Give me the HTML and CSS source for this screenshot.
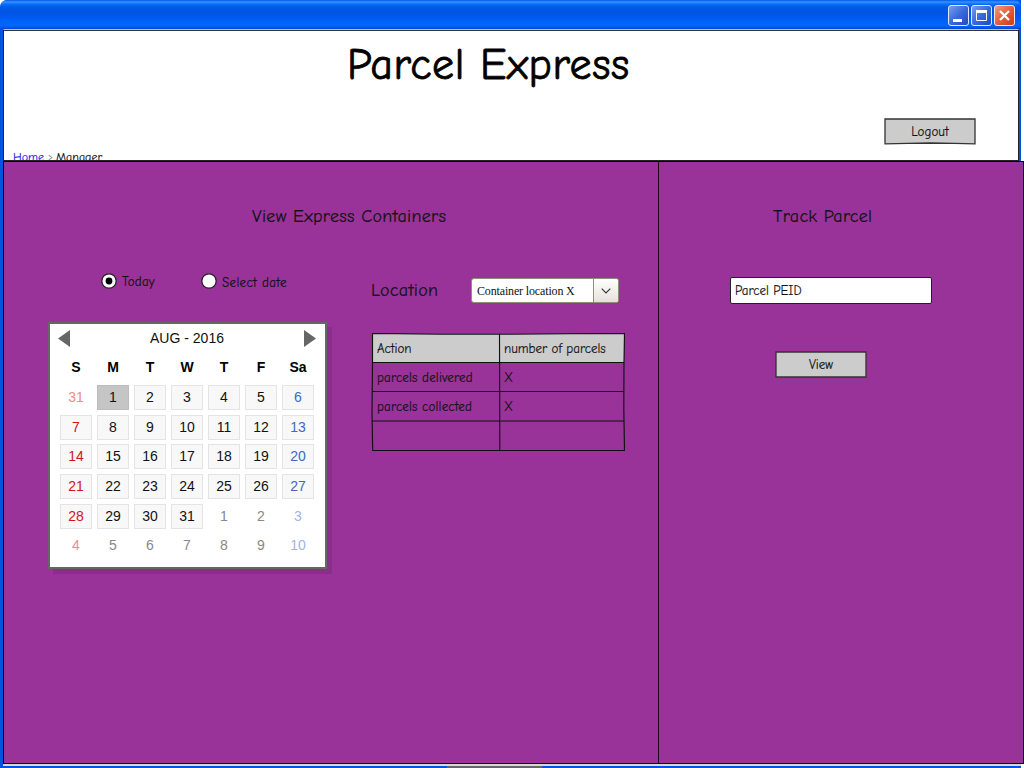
FILE: index.html
```html
<!DOCTYPE html>
<html lang="en">
<head>
<meta charset="utf-8">
<title>Parcel Express</title>
<link rel="stylesheet" href="styles.css">
</head>
<body>
<div class="window">
  <div class="titlebar">
    <svg class="win-btn" viewBox="0 0 21 21"><defs><linearGradient id="gb" x1="0" y1="0" x2="1" y2="1"><stop offset="0" stop-color="#7ba2f0"/><stop offset=".5" stop-color="#3a69dc"/><stop offset="1" stop-color="#1c48c4"/></linearGradient><linearGradient id="gr" x1="0" y1="0" x2="1" y2="1"><stop offset="0" stop-color="#f0a088"/><stop offset=".5" stop-color="#e35f3c"/><stop offset="1" stop-color="#cc3a10"/></linearGradient></defs><rect x=".5" y=".5" width="20" height="20" rx="2.5" fill="url(#gb)" stroke="#dfe9fb"/><rect x="5" y="14" width="9" height="3" fill="#fff"/></svg>
    <svg class="win-btn" viewBox="0 0 21 21"><rect x=".5" y=".5" width="20" height="20" rx="2.5" fill="url(#gb)" stroke="#dfe9fb"/><path d="M5.500 6V15.500H15.500V6" fill="none" stroke="#fff"/><rect x="5" y="5" width="11" height="3" fill="#fff"/></svg>
    <svg class="win-btn" viewBox="0 0 21 21"><rect x=".5" y=".5" width="20" height="20" rx="2.5" fill="url(#gr)" stroke="#f6e4e0"/><path d="M6 6L15 15M15 6L6 15" stroke="#fff" stroke-width="2.2"/></svg>
  </div>
  <header class="header">
    <h1 class="title"><span>Parcel Express</span></h1>
    <button class="btn logout"><svg class="sketch" viewBox="0 0 92 27"><path d="M1 1H91V25.800L70 25.400L46 25L24 25.400L1 25.800Z"/></svg><span>Logout</span></button>
    <nav class="crumbs"><a class="home">Home</a><span class="sep">&gt;</span><span>Manager</span></nav>
  </header>
  <main class="main">
    <section class="containers">
      <h2 class="heading"><span>View Express Containers</span></h2>
      <div class="columns">
        <div class="date-col">
          <div class="radios">
            <svg class="radio" viewBox="0 0 16 16"><circle cx="8" cy="8" r="7.2"/><circle class="dot" cx="8" cy="8" r="3.4"/></svg><span class="t-today">Today</span>
            <svg class="radio" viewBox="0 0 16 16"><circle cx="8" cy="8" r="7.2"/></svg><span class="t-select">Select date</span>
          </div>
          <div class="calendar">
            <div class="cal-head">
              <svg class="arrow" viewBox="0 0 12 17"><path d="M12 0V17L0 8.500Z"/></svg>
              <span>AUG - 2016</span>
              <svg class="arrow" viewBox="0 0 12 17"><path d="M0 0V17L12 8.500Z"/></svg>
            </div>
            <div class="weekdays"><b>S</b><b>M</b><b>T</b><b>W</b><b>T</b><b>F</b><b>Sa</b></div>
            <div class="days">
              <i class="out sun">31</i><i class="picked">1</i><i>2</i><i>3</i><i>4</i><i>5</i><i class="sat">6</i>
              <i class="sun">7</i><i>8</i><i>9</i><i>10</i><i>11</i><i>12</i><i class="sat">13</i>
              <i class="sun">14</i><i>15</i><i>16</i><i>17</i><i>18</i><i>19</i><i class="sat">20</i>
              <i class="sun">21</i><i>22</i><i>23</i><i>24</i><i>25</i><i>26</i><i class="sat">27</i>
              <i class="sun">28</i><i>29</i><i>30</i><i>31</i><i class="out">1</i><i class="out">2</i><i class="out sat">3</i>
              <i class="out sun">4</i><i class="out">5</i><i class="out">6</i><i class="out">7</i><i class="out">8</i><i class="out">9</i><i class="out sat">10</i>
            </div>
          </div>
        </div>
        <div class="loc-col">
          <div class="loc-row">
            <span class="t-location">Location</span>
            <div class="select"><span class="select-text">Container location X</span><span class="select-btn"><svg viewBox="0 0 10 6"><path d="M.7 .7L5 5L9.300 .7"/></svg></span></div>
          </div>
          <div class="table">
            <svg class="grid-lines" viewBox="0 0 254 119"><path class="fill" d="M1 1H253V30H1Z"/><path d="M1.500 .5L70 1.200L140 1.200L200 .8L253.500 .5L253 29.500H1.500ZM1.500 29.500L1 80L1.700 117.500H253.500L252.800 75L253 29.500M1.500 58.500H253M1.500 88H253M128.500 .5L128.800 117.500"/></svg>
            <div class="row"><span>Action</span><span>number of parcels</span></div>
            <div class="row item"><span>parcels delivered</span><span>X</span></div>
            <div class="row item"><span>parcels collected</span><span>X</span></div>
            <div class="row"><span></span><span></span></div>
          </div>
        </div>
      </div>
    </section>
    <section class="track">
      <h2 class="heading"><span>Track Parcel</span></h2>
      <div class="field"><span>Parcel PEID</span></div>
      <button class="btn view"><svg class="sketch" viewBox="0 0 92 27"><path d="M1 1H91V26H1Z"/></svg><span>View</span></button>
    </section>
  </main>
  <footer class="bottom"><span class="thumb"></span></footer>
</div>
</body>
</html>
```
FILE: styles.css
```css
* { box-sizing: border-box; }
body { margin: 0; background: #fff; font-family: "Comic Sans MS", "Comic Neue", Lato, sans-serif; font-size: 13px; color: #111; -webkit-text-stroke: 0.15px; }
h1, h2 { margin: 0; font-weight: 400; }
span { white-space: nowrap; }
svg { display: block; }
.window { width: 1024px; height: 768px; overflow: hidden; display: flex; flex-direction: column; background: linear-gradient(90deg, #0054e3 0 1021px, #fff 1021px); border-radius: 7px 0 0 0; }
.titlebar { width: 1021px; height: 29px; flex: none; display: flex; gap: 2px; justify-content: flex-end; padding: 5px 6px 0 0; border-radius: 7px 7px 0 0; background: linear-gradient(#0058e6 0, #3a93ff 2px, #0871fb 4px, #0059e8 7px, #0054e3 13px, #005df5 19px, #0068ff 25px, #0055e5 28px, #003dce 29px); }
.win-btn { width: 21px; height: 21px; }
.header { width: 1016px; height: 132px; flex: none; margin-left: 3px; background: #fff; border: 1px solid #222; border-top-color: #c8c4b8; display: flex; flex-direction: column; overflow: hidden; box-shadow: inset 0 1px 0 #333; }
.title { height: 75px; flex: none; padding: 9px 0 0 343px; font-size: 44px; line-height: 52px; letter-spacing: 0.55px; color: #000; -webkit-text-stroke: 0.8px; }
.btn { position: relative; width: 92px; height: 27px; flex: none; padding: 0; border: 0; background: none; font: inherit; color: #111; display: flex; align-items: center; justify-content: center; }
.btn span { position: relative; }
.sketch { position: absolute; inset: 0; width: 92px; height: 27px; fill: #ccc; stroke: #333; stroke-width: 1.3; }
.logout { margin: 13px 0 0 880px; }
.crumbs { height: 18px; flex: none; margin: 3px 0 0 9px; line-height: 18px; display: flex; font-size: 12px; }
.home { color: #1c1cf0; text-decoration: underline; text-underline-offset: 0; width: 35px; }
.sep { color: #777; width: 8px; font-size: 9px; }
.main { width: 1021px; height: 603px; flex: none; margin-left: 3px; display: flex; background: #993399; border: 1px solid #000; }
.containers { width: 655px; flex: none; border-right: 1px solid #1a081a; }
.track { flex: 1; min-width: 0; }
.heading { height: 116px; padding: 44px 0 0 248px; font-size: 18px; line-height: 22px; letter-spacing: 0.3px; }
.track .heading { padding-left: 114px; }
.columns { display: flex; }
.date-col { padding-left: 44px; width: 366px; }
.radios { height: 44px; margin-top: -5px; padding-left: 53px; display: flex; align-items: flex-start; line-height: 18px; }
.radio { width: 16px; height: 16px; margin-right: 5px; fill: #fff; stroke: #222; stroke-width: 1.3; }
.dot { fill: #000; stroke: none; }
.t-today { width: 79px; letter-spacing: 0.2px; }
.t-select { letter-spacing: 0.36px; margin-top: 1px; }
.calendar { width: 279px; height: 247px; background: #fff; border: 2px solid #666; box-shadow: 5px 5px 0 #892e89; font: 14px/25px "Liberation Sans", Arial, sans-serif; padding: 0 10px; margin-top: 5px; -webkit-text-stroke: 0; }
.cal-head { display: flex; justify-content: space-between; align-items: center; height: 29px; margin: 0 -1px 0 -2px; }
.arrow { width: 12px; height: 17px; fill: #666; }
.weekdays, .days { display: grid; grid-template-columns: repeat(7, 32px); column-gap: 5px; text-align: center; }
.weekdays { height: 32px; line-height: 29px; color: #000; }
.days { grid-auto-rows: 25px; row-gap: 4.65px; }
.days i { font-style: normal; border: 1px solid #e4e4e4; background: #f8f8f8; line-height: 23px; }
.days .sun { color: #d41217; }
.days .sat { color: #4169bd; }
.days .picked { background: #c5c5c5; border-color: #bcbcbc; }
.days .out { background: none; border-color: transparent; color: #888; }
.days .out.sun { color: #ee8b8b; }
.days .out.sat { color: #a0b5df; }
.loc-row { display: flex; height: 55px; line-height: 26px; font-size: 18px; letter-spacing: 0.3px; padding-left: 1px; }
.t-location { width: 100px; }
.select { width: 148px; height: 25px; border: 1px solid #918e76; border-radius: 3px; background: #fff; display: flex; overflow: hidden; font: 12px/24px "Liberation Serif", "Times New Roman", serif; letter-spacing: -0.15px; -webkit-text-stroke: 0; }
.select-text { width: 122px; flex: none; padding-left: 5px; border-right: 1px solid #918e76; }
.select-btn { flex: 1; display: flex; align-items: center; justify-content: center; background: linear-gradient(#fff, #e5e2d8); }
.select-btn svg { width: 10px; height: 6px; fill: none; stroke: #333; stroke-width: 1.1; }
.table { position: relative; width: 254px; margin-left: 1px; }
.grid-lines { position: absolute; inset: 0; width: 254px; height: 119px; fill: none; stroke: #111; stroke-width: 1.15; }
.grid-lines .fill { fill: #ccc; stroke: none; }
.row { position: relative; height: 29px; display: grid; grid-template-columns: 127px 1fr; line-height: 32px; padding-left: 6px; }
.item { letter-spacing: 0.17px; line-height: 31px; }
.field { width: 202px; height: 27px; margin: -1px 0 0 71px; background: #fff; border: 1px solid #222; border-radius: 2px; padding-left: 4px; line-height: 26px; }
.view { margin: 47px 0 0 116px; }
.bottom { height: 4px; width: 1018px; flex: none; border-top: 2px solid #d9d9cc; margin-left: 3px; padding-left: 444px; }
.thumb { display: block; width: 95px; height: 2px; background: #666; }
```
